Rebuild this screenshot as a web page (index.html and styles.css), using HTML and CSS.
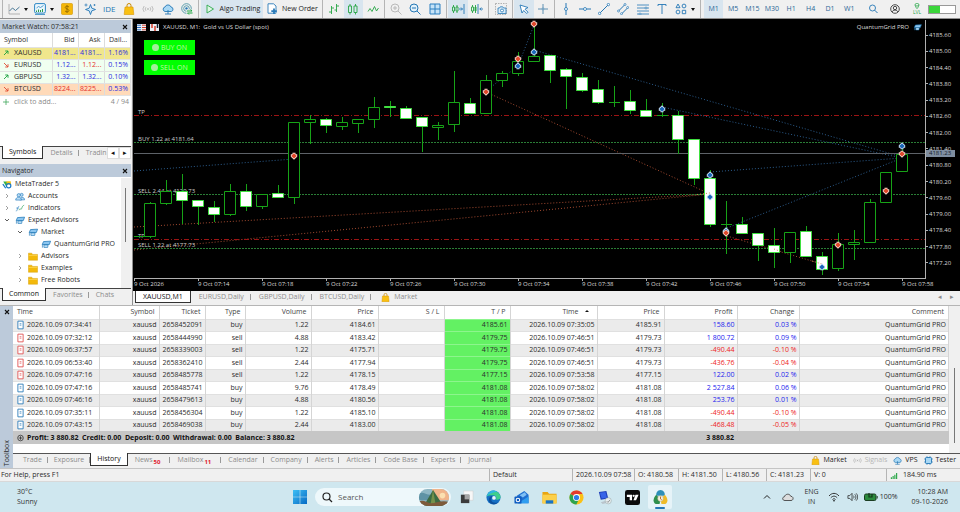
FILE: index.html
```html
<!DOCTYPE html>
<html lang="en">
<head>
<meta charset="utf-8">
<title>MetaTrader 5</title>
<link rel="stylesheet" href="styles.css">
</head>
<body>
<svg class="defs" aria-hidden="true">
  <symbol id="bag" viewBox="0 0 12 12"><path d="M4 4V2.500a2 2 0 0 1 4 0V4" fill="none" stroke="#c98a00" stroke-width="1"/><path d="M2 4h8l.8 7.500H1.200z" fill="#f9c013" stroke="#d99500" stroke-width=".6"/></symbol>
  <symbol id="signal" viewBox="0 0 12 12"><g fill="none" stroke="currentColor" stroke-width=".9"><path d="M2.200 3a4.500 4.500 0 0 0 0 6M9.800 3a4.500 4.500 0 0 1 0 6M4 4.200a2.600 2.600 0 0 0 0 3.600M8 4.200a2.600 2.600 0 0 1 0 3.600"/></g><circle cx="6" cy="6" r=".9" fill="currentColor"/></symbol>
  <symbol id="cloud" viewBox="0 0 12 12"><path d="M3 8.500a2.300 2.300 0 0 1 0-4.500A3.200 3.200 0 0 1 9 4a2.300 2.300 0 0 1 .3 4.500z" fill="#a9d8f5" stroke="#2577b5" stroke-width=".9"/><path d="M6 7v4M3 11h6" fill="none" stroke="#2577b5" stroke-width=".9"/></symbol>
  <symbol id="cap" viewBox="0 0 12 10"><path d="M3 1.500 11.500 1 10 5H1.500z" fill="#8cc6f0" stroke="#1f78b8" stroke-width=".9"/><path d="M3.500 5.500h5L8 8.500H3.500zM1.700 5v3.800" fill="#c5e4f8" stroke="#1f78b8" stroke-width=".8"/></symbol>
  <symbol id="folder" viewBox="0 0 12 10"><path d="M.5 1h4l1 1.500h6V9.500H.5z" fill="#f3b90b" stroke="#d29a00" stroke-width=".5"/><path d="M.8 3.800h10.500" stroke="#ffdf6a" stroke-width=".7"/></symbol>
  <symbol id="doc" viewBox="0 0 8 10"><path d="M1 .6h6v8.800H1z" fill="#fff" stroke="currentColor" stroke-width="1"/><path d="M3 3.500h2M3 5.200h2" stroke="currentColor" stroke-width=".8"/></symbol>
  <symbol id="red" viewBox="0 0 8 8"><path d="M2.500.8h3v1.400h1.700v2.500L4 7.800.8 4.700V2.200h1.700z" fill="#fbd9cf"/><path d="M4 1.200 6.700 4 4 6.600 1.300 4z" fill="#e0472a"/></symbol>
  <symbol id="blue" viewBox="0 0 8 8"><path d="M4 .2 7.200 3.300v2.500H5.500v1.400h-3V5.800H.8V3.300z" fill="#cfe4f7"/><path d="M4 1.400 6.700 4 4 6.800 1.300 4z" fill="#1a66b8"/></symbol>
  <symbol id="x" viewBox="0 0 6 6"><path d="M1 1l4 4M5 1 1 5" stroke="#111" stroke-width="1.100"/></symbol>
  <symbol id="exp" viewBox="0 0 6 6"><path d="M2 1l2 2-2 2" fill="none" stroke="#888" stroke-width=".8"/></symbol>
  <symbol id="col" viewBox="0 0 6 6"><path d="M1 2l2 2 2-2" fill="none" stroke="#333" stroke-width=".8"/></symbol>
  <symbol id="up" viewBox="0 0 6 6"><path d="M1 5 5 1M2.200 1H5v2.800" fill="none" stroke="#18a03c" stroke-width=".9"/></symbol>
  <symbol id="down" viewBox="0 0 6 6"><path d="M1 1l4 4M5 2.200V5H2.200" fill="none" stroke="#e04b32" stroke-width=".9"/></symbol>
</svg>

<header class="toolbar">
  <div class="group first">
    <button class="tool dd" aria-label="Charts"><svg class="i" viewBox="0 0 12 12"><path d="M1 1v10h11" fill="none" stroke="#999" stroke-width=".7"/><path d="M1.500 8l3-3 3 2.500L11.500 4" fill="none" stroke="#4a7896" stroke-width="1"/></svg><i class="caret"></i></button>
    <button class="tool dd" aria-label="Indicators"><svg class="i" viewBox="0 0 12 12"><rect x=".6" y=".6" width="10.800" height="9.500" rx="1.500" fill="#eaf5fc" stroke="#2a86c4"/><path d="M2.500 5l2-1.500 2 1L9.500 2.500" fill="none" stroke="#2a86c4" stroke-width=".8"/><path d="M2.500 9V7.500M4.500 9V6.500M6.500 9V7M8.500 9V6" stroke="#2a9d4a"/><path d="M1 11.500h10" stroke="#2a86c4" stroke-width=".8"/></svg><i class="caret"></i></button>
    <button class="tool" aria-label="Deposit"><svg class="i" viewBox="0 0 12 12"><rect x=".5" y=".5" width="11" height="11" rx="1" fill="#f5b70a" stroke="#d29400" stroke-width=".6"/><path d="M8 4C7 2.800 4.200 3 4.200 4.500S8 6 8 7.500 5 9.200 4 8M6 2v8" fill="none" stroke="#8d6400" stroke-width=".8"/></svg></button>
  </div>
  <div class="group six">
    <button class="tool" aria-label="Assistant"><svg class="i" viewBox="0 0 12 12"><path d="M6.500 1.500 7.800 5.200 11.500 6.500 7.800 7.800 6.500 11.500 5.200 7.800 1.500 6.500 5.200 5.200z" fill="#d4eafa" stroke="#2577b5" stroke-width=".9"/><path d="M2 .5v3M.5 2h3M10.500 1v2M9.500 2h2" stroke="#2577b5" stroke-width=".7"/></svg></button>
    <button class="tool ide">IDE</button>
    <button class="tool" aria-label="Market"><svg class="i"><use href="#bag"/></svg></button>
    <button class="tool pale" aria-label="Signals"><svg class="i"><use href="#signal"/></svg></button>
    <button class="tool" aria-label="VPS"><svg class="i"><use href="#cloud"/></svg></button>
    <button class="tool" aria-label="Copy trading"><svg class="i" viewBox="0 0 12 12"><g fill="none" stroke="#3a8a9c" stroke-width=".8"><circle cx="5.500" cy="5.500" r="4.800"/><circle cx="5.500" cy="5.500" r="2.800"/></g><circle cx="5.500" cy="5.500" r="1.200" fill="#2577b5"/><path d="M5.500 6.500h6v5h-6z" fill="#f0f0f0"/><path d="M6 8h5L9.500 6.700M11.500 10H6.500L8 11.500" fill="none" stroke="#1ba53e" stroke-width="1"/></svg></button>
  </div>
  <div class="group wide">
    <button class="tool text on"><svg class="i" viewBox="0 0 12 12"><path d="M3 2l6.500 4L3 10z" fill="#dff5e4" stroke="#2ca84c" stroke-width=".9"/></svg>Algo Trading</button>
    <button class="tool text"><svg class="i" viewBox="0 0 12 12"><path d="M2 .8h5.500L10 3v7.200H2z" fill="#fff" stroke="#2a7ab8" stroke-width=".9"/><path d="M8 5.500v5.500M5.300 8.200h5.500" stroke="#2a7ab8" stroke-width="1.800"/></svg>New Order</button>
  </div>
  <div class="group three">
    <button class="tool" aria-label="Bar chart"><svg class="i" viewBox="0 0 12 12"><path d="M3.500 3v8M1 9h2.500M3.500 5H6M8.500 1v8M6.500 7h2M8.500 3H11" fill="none" stroke="#26a544" stroke-width=".9"/></svg></button>
    <button class="tool on" aria-label="Candlestick chart"><svg class="i" viewBox="0 0 12 12"><path d="M1.500 3h3v6.500h-3zM7 3h3v6.500H7zM3 1v2M3 9.500V11.500M8.500 1v2M8.500 9.500v2" fill="none" stroke="#26a544" stroke-width=".9"/></svg></button>
    <button class="tool" aria-label="Line chart"><svg class="i" viewBox="0 0 12 12"><path d="M1 8.500l2-3 2 3 2.500-5 2 4.500L11.500 5" fill="none" stroke="#26a544" stroke-width=".9"/></svg></button>
  </div>
  <div class="group three">
    <button class="tool pale" aria-label="Zoom in"><svg class="i" viewBox="0 0 12 12"><circle cx="5" cy="5" r="4" fill="none" stroke="currentColor"/><path d="M8 8l3.500 3.500M3 5h4M5 3v4" stroke="currentColor"/></svg></button>
    <button class="tool" aria-label="Zoom out"><svg class="i" viewBox="0 0 12 12"><circle cx="5" cy="5" r="4" fill="#e2f1fa" stroke="#2577b5"/><path d="M8 8l3.500 3.500M3 5h4" stroke="#2577b5"/></svg></button>
    <button class="tool" aria-label="Tile windows"><svg class="i" viewBox="0 0 12 12"><path d="M1 1h10v10H1zM6 1v10M1 6h10" fill="#c6e3f7" stroke="#2a7fc0"/></svg></button>
  </div>
  <div class="group two">
    <button class="tool on" aria-label="Auto scroll"><svg class="i wide-i" viewBox="0 0 14 12"><path d="M1.500 4v4h2V4zM2.500 2v2M2.500 8v2M5 4v4h2V4zM6 2v2M6 8v2" fill="none" stroke="#26a544" stroke-width=".9"/><path d="M8 6h3.500M10 4.500 11.500 6 10 7.500M13 1v10" fill="none" stroke="#2577b5" stroke-width=".9"/></svg></button>
    <button class="tool" aria-label="Chart shift"><svg class="i wide-i" viewBox="0 0 14 12"><path d="M1.500 4v4h2V4zM2.500 2v2M2.500 8v2M5 4v4h1V4zM5.500 2v8" fill="none" stroke="#26a544" stroke-width=".9"/><path d="M8 1v10M13 6H9.800M11.300 4.500 9.800 6l1.500 1.500" fill="none" stroke="#2577b5" stroke-width=".9"/></svg></button>
  </div>
  <div class="group one">
    <button class="tool" aria-label="Screenshot"><svg class="i" viewBox="0 0 12 12"><rect x=".5" y=".5" width="11" height="11" fill="none" stroke="#888" stroke-width=".6" stroke-dasharray="1.500 1"/><path d="M3 5h1.500l.8-1.200h2.400L8.500 5h2.500v5.500H3z" fill="#d9ecf9" stroke="#2577b5" stroke-width=".8"/><circle cx="7" cy="7.500" r="1.500" fill="#fff" stroke="#2577b5" stroke-width=".8"/></svg></button>
  </div>
  <div class="group two">
    <button class="tool on" aria-label="Cursor"><svg class="i" viewBox="0 0 12 12"><path d="M2 2l8 2.500-3 1.700 3 3-1.300 1.300-3-3L4 10z" fill="#fff" stroke="#2577b5" stroke-width=".9"/></svg></button>
    <button class="tool" aria-label="Crosshair"><svg class="i" viewBox="0 0 12 12"><path d="M6 1v10M1 6h10" stroke="#4f86ab" stroke-width=".9"/><circle cx="6" cy="6" r="1.400" fill="#7ba6c4"/></svg></button>
  </div>
  <div class="group seven">
    <button class="tool" aria-label="Vertical line"><svg class="i" viewBox="0 0 12 12"><path d="M6 0v12" stroke="#2577b5"/><circle cx="6" cy="6" r="1.500" fill="#fff" stroke="#2577b5" stroke-width=".8"/></svg></button>
    <button class="tool" aria-label="Horizontal line"><svg class="i" viewBox="0 0 12 12"><path d="M0 6h12" stroke="#2577b5"/><circle cx="6" cy="6" r="1.500" fill="#fff" stroke="#2577b5" stroke-width=".8"/></svg></button>
    <button class="tool" aria-label="Trendline"><svg class="i" viewBox="0 0 12 12"><path d="M2 10l8-8" stroke="#2577b5"/><circle cx="1.600" cy="10.400" r="1.200" fill="#fff" stroke="#2577b5" stroke-width=".8"/><circle cx="10.400" cy="1.600" r="1.200" fill="#fff" stroke="#2577b5" stroke-width=".8"/></svg></button>
    <button class="tool" aria-label="Channel"><svg class="i" viewBox="0 0 12 12"><path d="M1.500 8 8 1.500M4.500 11 11 4.500" stroke="#2577b5"/><g fill="#fff" stroke="#2577b5" stroke-width=".7"><circle cx="1.500" cy="8" r="1"/><circle cx="8" cy="1.500" r="1"/><circle cx="4.500" cy="10.700" r="1"/><circle cx="10.700" cy="4.500" r="1"/></g></svg></button>
    <button class="tool" aria-label="Fibonacci"><svg class="i" viewBox="0 0 12 12"><path d="M0 2h12M0 5h12M0 8h12M0 11h12" stroke="#2577b5" stroke-width=".8"/><g fill="#fff" stroke="#2577b5" stroke-width=".7"><circle cx="3" cy="11" r="1"/><circle cx="9" cy="5" r="1"/></g></svg></button>
    <button class="tool" aria-label="Text label"><svg class="i" viewBox="0 0 12 12"><path d="M2 3V1.500h8V3M6 1.500v9.500" fill="none" stroke="#2577b5" stroke-width=".9"/></svg></button>
    <button class="tool" aria-label="Shapes"><svg class="i" viewBox="0 0 12 12"><g fill="none" stroke="#2577b5" stroke-width=".9"><path d="M3 1l2 3.700H1z"/><circle cx="9" cy="3" r="1.900"/><circle cx="3" cy="9" r="1.900"/><path d="M7.300 7.300h3.400v3.400H7.300z"/></g></svg></button>
    <i class="caret"></i>
  </div>
  <div class="group eight frames">
    <button class="tool on">M1</button><button class="tool">M5</button><button class="tool">M15</button><button class="tool">M30</button><button class="tool">H1</button><button class="tool">H4</button><button class="tool">D1</button><button class="tool">W1</button>
  </div>
  <div class="end">
    <button class="tool" aria-label="Search"><svg class="i" viewBox="0 0 12 12"><circle cx="5.500" cy="5" r="3" fill="none" stroke="#2577b5" stroke-width=".9"/><path d="M7.700 7.200 10.500 10" stroke="#2577b5"/></svg></button>
    <button class="tool" aria-label="Account"><svg class="i" viewBox="0 0 12 12"><g fill="none" stroke="#222" stroke-width=".8"><circle cx="6" cy="6" r="4.300"/><circle cx="6" cy="5" r="1.700"/><path d="M3 9c1-2.500 5-2.500 6 0"/></g></svg></button>
    <button class="tool lvl"><svg class="mini" viewBox="0 0 6 6"><path d="M3 .3C5.500.3 5.500 3 3 5.600.5 3 .5.3 3 .3zM1.500 2.300l1.500 1L4.800 2" fill="none" stroke="#21a443" stroke-width=".8"/></svg>LVL</button>
    <span class="gauge"><span></span></span>
  </div>
</header>

<main class="work">
  <aside class="side">
    <section class="panel watch">
      <h2>Market Watch: 07:58:21<button aria-label="Close market watch"><svg class="x"><use href="#x"/></svg></button></h2>
      <table class="quotes">
        <thead><tr><th>Symbol</th><th>Bid</th><th>Ask</th><th>Dail...</th></tr></thead>
        <tbody>
          <tr class="gold"><td><svg><use href="#up"/></svg>XAUUSD</td><td>4181...</td><td>4181...</td><td>1.16%</td></tr>
          <tr class="mint"><td><svg><use href="#down"/></svg>EURUSD</td><td>1.12...</td><td class="neg">1.12...</td><td>0.15%</td></tr>
          <tr class="mint"><td><svg><use href="#up"/></svg>GBPUSD</td><td>1.32...</td><td>1.32...</td><td>0.10%</td></tr>
          <tr class="peach"><td><svg><use href="#down"/></svg>BTCUSD</td><td class="neg">8224...</td><td class="neg">8225...</td><td>0.53%</td></tr>
        </tbody>
      </table>
      <div class="add"><svg viewBox="0 0 6 6"><path d="M3 0v6M0 3h6" stroke="#3fa65a" stroke-width=".8"/></svg><span>click to add...</span><span>4 / 94</span></div>
      <nav class="tabs side-tabs"><a href="#" class="sel">Symbols</a><a href="#">Details</a><a href="#" class="cut">Tradin</a><button aria-label="Previous">◂</button><button aria-label="Next">▸</button></nav>
    </section>
    <section class="panel nav">
      <h2>Navigator<button aria-label="Close navigator"><svg class="x"><use href="#x"/></svg></button></h2>
      <div class="tree-wrap">
      <ul class="tree">
        <li class="root"><svg class="t" viewBox="0 0 12 10"><path d="M1.500 1.500h4L7 4 5 7.500z" fill="#37b34a"/><path d="M5 1h5.500L11 5H6z" fill="#f2c21a"/><circle cx="8" cy="6.500" r="2.600" fill="none" stroke="#1878c8" stroke-width="1.400"/><path d="M1 4.500 4.500 9.500" stroke="#1878c8" stroke-width="1.500"/></svg>MetaTrader 5</li>
        <li><svg class="e"><use href="#exp"/></svg><svg class="t" viewBox="0 0 12 10"><g fill="#b9dcf5" stroke="#2a7fc0" stroke-width=".8"><circle cx="8" cy="3" r="1.800"/><path d="M5.500 9c0-4 6-4 6 0z"/><circle cx="4.500" cy="3.500" r="2"/><path d="M.8 9.300c0-4.500 7-4.500 7 0z"/></g></svg>Accounts</li>
        <li><svg class="e"><use href="#exp"/></svg><svg class="t" viewBox="0 0 12 10"><path d="M1 8c2 1 2-6 4-5.500M1.500 4.500h3" fill="none" stroke="#2a7fc0" stroke-width=".8"/><path d="M5 7c1-4 2 1 3-2s1-3 3-4" fill="none" stroke="#2ca05a" stroke-width=".8"/></svg>Indicators</li>
        <li><svg class="e"><use href="#col"/></svg><svg class="t"><use href="#cap"/></svg>Expert Advisors</li>
        <li class="l2"><svg class="e"><use href="#col"/></svg><svg class="t"><use href="#cap"/></svg>Market</li>
        <li class="l3"><svg class="t"><use href="#cap"/></svg>QuantumGrid PRO</li>
        <li class="l2"><svg class="e"><use href="#exp"/></svg><svg class="t"><use href="#folder"/></svg>Advisors</li>
        <li class="l2"><svg class="e"><use href="#exp"/></svg><svg class="t"><use href="#folder"/></svg>Examples</li>
        <li class="l2"><svg class="e"><use href="#exp"/></svg><svg class="t"><use href="#folder"/></svg>Free Robots</li>
        <li class="l2"><svg class="e"><use href="#exp"/></svg><svg class="t"><use href="#folder"/></svg></li>
      </ul>
      <div class="scroll"><span></span></div>
      </div>
      <nav class="tabs side-tabs"><a href="#" class="sel">Common</a><a href="#">Favorites</a><a href="#" class="end-tab">Chats</a></nav>
    </section>
  </aside>

  <section class="chart-col">
    <div class="chart">
      <div class="plot">
        <svg class="canvas">
          <g transform="translate(-134 -20)">
            <g fill="none" stroke="#2b5c8c" stroke-dasharray="1 2">
              <path d="M134 171 294 159M486 91 518 66 534 25M534 50 902 157M662 107 902 158M710 172 902 158M727 228 902 158"/>
            </g>
            <g fill="none" stroke="#a34a30" stroke-dasharray="1 2">
              <path d="M486 92 710 194M134 227 710 194M134 250 710 194M727 236 822 264"/>
            </g>
            <path d="M134 115.500H2000M134 239.500H2000" stroke="#9c1414" stroke-dasharray="5 2 1 2"/>
            <path d="M134 142.500H2000M134 194.500H2000M134 248.500H2000" stroke="#2a7d36" stroke-dasharray="2 1"/>
            <path d="M134 153.500H2000" stroke="#5d6268"/>
            <g class="ctext">
              <text x="138" y="114">TP</text><text x="138" y="141">BUY 1.22 at 4181.64</text><text x="138" y="193">SELL 2.44 at 4179.73</text><text x="138" y="238">TP</text><text x="138" y="247">SELL 1.22 at 4177.73</text>
            </g>
            <path class="wick" d="M134 236.500h11M150.500 202v36M166.500 180v25M182.500 174v50M198.500 201v24M214.500 201v21M230.500 184v32M246.500 184v27M262.500 194v15M278.500 185v9M294.500 197v7M310.500 115v29M326.500 118v15M342.500 117v13M358.500 119v14M374.500 97v31M390.500 101v16M406.500 106v12M422.500 118v34M438.500 122v18M454.500 71v61M470.500 98v8M486.500 75v6M502.500 71v16M518.500 52v24M534.500 25v32M550.500 55v28M566.500 68v41M582.500 73v19M598.500 80v24M614.500 86v21M630.500 90v24M646.500 99v12M662.500 103v14M678.500 111v43M694.500 139v46M710.500 170v57M726.500 201v53M742.500 217v8M758.500 233v28M774.500 228v40M790.500 232v31M806.500 226v6M822.500 252v23M838.500 233v38M854.500 230v30M870.500 199v4M902.500 145v9M609 102.500h11M657 115.500h11M721 224.500h11"/>
            <g transform="translate(-.5 0)">
            <path class="hollow" d="M145 203.500h11v33h-11zM161 191.500h11v12h-11zM225 191.500h11v23h-11zM257 194.500h11v12h-11zM289 122.500h11v75h-11zM305 119.500h11v3h-11zM337 122.500h11v4h-11zM353 119.500h11v4h-11zM369 107.500h11v12h-11zM433 125.500h11v2h-11zM449 102.500h11v22h-11zM481 80.500h11v33h-11zM497 73.500h11v7h-11zM513 61.500h11v12h-11zM529 56.500h11v5h-11zM785 232.500h11v20h-11zM833 244.500h11v24h-11zM849 242.500h11v2h-11zM865 202.500h11v40h-11zM881 172.500h11v30h-11zM897 154.500h11v17h-11z"/>
            <path class="full" d="M177 191.500h11v9h-11zM193 200.500h11v6h-11zM209 207.500h11v7h-11zM241 191.500h11v15h-11zM273 193.500h11v4h-11zM321 119.500h11v6h-11zM385 106.500h11v1h-11zM401 108.500h11v10h-11zM417 117.500h11v9h-11zM465 103.500h11v10h-11zM545 55.500h11v15h-11zM561 69.500h11v7h-11zM577 77.500h11v13h-11zM593 89.500h11v13h-11zM625 101.500h11v9h-11zM641 110.500h11v6h-11zM673 115.500h11v24h-11zM689 139.500h11v39h-11zM705 178.500h11v46h-11zM737 224.500h11v9h-11zM753 233.500h11v12h-11zM769 245.500h11v7h-11zM801 231.500h11v25h-11zM817 256.500h11v13h-11z"/>
            </g>
            <path d="M697 194.500 710 193M774 249l8 3M812 261l10 3" fill="none" stroke="#c98a50" stroke-dasharray="1 2"/>
            <g>
              <use href="#red" x="290" y="152" width="8" height="8"/><use href="#red" x="482" y="88" width="8" height="8"/><use href="#red" x="514" y="55" width="8" height="8"/><use href="#red" x="530" y="20" width="8" height="8"/><use href="#red" x="882" y="187" width="8" height="8"/><use href="#red" x="834" y="241" width="8" height="8"/><use href="#blue" x="722" y="227" width="8" height="8"/><use href="#red" x="722" y="229" width="8" height="8"/><use href="#blue" x="514" y="62" width="8" height="8"/><use href="#blue" x="530" y="48" width="8" height="8"/><use href="#blue" x="658" y="105" width="8" height="8"/><use href="#blue" x="706" y="171" width="8" height="8"/><use href="#blue" x="706" y="193" width="8" height="8"/><use href="#blue" x="818" y="263" width="8" height="8"/><use href="#blue" x="898" y="142" width="8" height="8"/><use href="#red" x="898" y="150" width="8" height="8"/>
            </g>
          </g>
        </svg>
        <div class="chart-head">
          <svg viewBox="0 0 9 7"><path d="M0 0h9v7H0z" fill="#e8eef5"/><path d="M0 1.200h4M0 3.500h4M0 5.800h4" stroke="#2a6fc0"/><path d="M5 1.200h4M5 3.500h4M5 5.800h4" stroke="#d8402c"/></svg>
          <svg viewBox="0 0 9 7"><path d="M0 0h9v7H0z" fill="#e8eef5"/><path d="M2 0v4M5 2v5" stroke="#d8402c" stroke-width="1.500"/><path d="M7.500 0v4" stroke="#123" stroke-width="1.500"/></svg>
          <span>XAUUSD, M1:&nbsp; Gold vs US Dollar (spot)</span>
          <span class="expert">QuantumGrid PRO</span><svg class="capi"><use href="#cap"/></svg>
        </div>
        <div class="trade-btns"><button>BUY ON</button><button>SELL ON</button></div>
      </div>
      <div class="prices">
        <span>4185.60</span><span>4185.00</span><span>4184.40</span><span>4183.80</span><span>4183.20</span><span>4182.60</span><span>4182.00</span><span>4181.40</span><span>4180.80</span><span>4180.20</span><span>4179.60</span><span>4179.00</span><span>4178.40</span><span>4177.80</span><span>4177.20</span>
        <b class="last">4181.23</b>
      </div>
      <div class="times"><span>9 Oct 2026</span><span>9 Oct 07:14</span><span>9 Oct 07:18</span><span>9 Oct 07:22</span><span>9 Oct 07:26</span><span>9 Oct 07:30</span><span>9 Oct 07:34</span><span>9 Oct 07:38</span><span>9 Oct 07:42</span><span>9 Oct 07:46</span><span>9 Oct 07:50</span><span>9 Oct 07:54</span><span>9 Oct 07:58</span></div>
    </div>
    <nav class="tabs chart-tabs"><a href="#" class="sel">XAUUSD,M1</a><a href="#">EURUSD,Daily</a><a href="#">GBPUSD,Daily</a><a href="#">BTCUSD,Daily</a><a href="#" class="mk"><svg class="s"><use href="#bag"/></svg>Market</a><span class="arrows"><i>◂</i><i>▸</i></span></nav>
  </section>
</main>

<section class="toolbox">
  <div class="strip"><button aria-label="Close toolbox"><svg class="x"><use href="#x"/></svg></button><span>Toolbox</span></div>
  <div class="tb-main">
    <div class="tb-body">
    <table class="history">
      <colgroup><col class="c1"><col class="c2"><col class="c3"><col class="c4"><col class="c5"><col class="c6"><col class="c5"><col class="c5"><col class="c7"><col class="c6"><col class="c8"><col class="c9"><col></colgroup>
      <thead><tr><th>Time</th><th>Symbol</th><th>Ticket</th><th>Type</th><th>Volume</th><th>Price</th><th>S / L</th><th>T / P</th><th>Time<i class="sort"></i></th><th>Price</th><th>Profit</th><th>Change</th><th>Comment</th></tr></thead>
      <tbody>
        <tr class="buy"><td><svg><use href="#doc"/></svg>2026.10.09 07:34:41</td><td>xauusd</td><td>2658452091</td><td>buy</td><td>1.22</td><td>4184.61</td><td></td><td>4185.61</td><td>2026.10.09 07:35:05</td><td>4185.91</td><td>158.60</td><td>0.03 %</td><td>QuantumGrid PRO</td></tr>
        <tr class="sell"><td><svg><use href="#doc"/></svg>2026.10.09 07:32:12</td><td>xauusd</td><td>2658444990</td><td>sell</td><td>4.88</td><td>4183.42</td><td></td><td>4179.75</td><td>2026.10.09 07:46:51</td><td>4179.73</td><td>1 800.72</td><td>0.09 %</td><td>QuantumGrid PRO</td></tr>
        <tr class="sell loss"><td><svg><use href="#doc"/></svg>2026.10.09 06:37:57</td><td>xauusd</td><td>2658339003</td><td>sell</td><td>1.22</td><td>4175.71</td><td></td><td>4179.75</td><td>2026.10.09 07:46:51</td><td>4179.73</td><td>-490.44</td><td>-0.10 %</td><td>QuantumGrid PRO</td></tr>
        <tr class="sell loss"><td><svg><use href="#doc"/></svg>2026.10.09 06:53:40</td><td>xauusd</td><td>2658362410</td><td>sell</td><td>2.44</td><td>4177.94</td><td></td><td>4179.75</td><td>2026.10.09 07:46:51</td><td>4179.73</td><td>-436.76</td><td>-0.04 %</td><td>QuantumGrid PRO</td></tr>
        <tr class="sell"><td><svg><use href="#doc"/></svg>2026.10.09 07:47:16</td><td>xauusd</td><td>2658485778</td><td>sell</td><td>1.22</td><td>4178.15</td><td></td><td>4177.15</td><td>2026.10.09 07:53:58</td><td>4177.15</td><td>122.00</td><td>0.02 %</td><td>QuantumGrid PRO</td></tr>
        <tr class="buy"><td><svg><use href="#doc"/></svg>2026.10.09 07:47:16</td><td>xauusd</td><td>2658485741</td><td>buy</td><td>9.76</td><td>4178.49</td><td></td><td>4181.08</td><td>2026.10.09 07:58:02</td><td>4181.08</td><td>2 527.84</td><td>0.06 %</td><td>QuantumGrid PRO</td></tr>
        <tr class="buy"><td><svg><use href="#doc"/></svg>2026.10.09 07:46:16</td><td>xauusd</td><td>2658479613</td><td>buy</td><td>4.88</td><td>4180.56</td><td></td><td>4181.08</td><td>2026.10.09 07:58:02</td><td>4181.08</td><td>253.76</td><td>0.01 %</td><td>QuantumGrid PRO</td></tr>
        <tr class="buy loss"><td><svg><use href="#doc"/></svg>2026.10.09 07:35:11</td><td>xauusd</td><td>2658456304</td><td>buy</td><td>1.22</td><td>4185.10</td><td></td><td>4181.08</td><td>2026.10.09 07:58:02</td><td>4181.08</td><td>-490.44</td><td>-0.10 %</td><td>QuantumGrid PRO</td></tr>
        <tr class="buy loss"><td><svg><use href="#doc"/></svg>2026.10.09 07:43:15</td><td>xauusd</td><td>2658469038</td><td>buy</td><td>2.44</td><td>4183.00</td><td></td><td>4181.08</td><td>2026.10.09 07:58:02</td><td>4181.08</td><td>-468.48</td><td>-0.05 %</td><td>QuantumGrid PRO</td></tr>
      </tbody>
      <tfoot><tr><td colspan="10"><svg viewBox="0 0 8 8"><circle cx="4" cy="4" r="3.200" fill="none" stroke="#222" stroke-width=".8"/><path d="M4 2v4M2 4h4" stroke="#222" stroke-width=".8"/></svg>Profit: 3 880.82&nbsp; Credit: 0.00&nbsp; Deposit: 0.00&nbsp; Withdrawal: 0.00&nbsp; Balance: 3 880.82</td><td>3 880.82</td><td></td><td></td></tr></tfoot>
    </table>
    <div class="scroll"><span></span></div>
    </div>
    <nav class="tabs tb-tabs"><a href="#">Trade</a><a href="#">Exposure</a><a href="#" class="sel">History</a><a href="#">News<sub>50</sub></a><a href="#">Mailbox<sub>11</sub></a><a href="#">Calendar</a><a href="#">Company</a><a href="#">Alerts</a><a href="#">Articles</a><a href="#">Code Base</a><a href="#">Experts</a><a href="#" class="end-tab">Journal</a>
      <span class="links"><button><svg class="s"><use href="#bag"/></svg>Market</button><button class="off"><svg class="s"><use href="#signal"/></svg>Signals</button><button><svg class="s"><use href="#cloud"/></svg>VPS</button><button><svg class="s" viewBox="0 0 12 12"><rect x="2" y="2" width="8" height="8" rx="1" fill="#a9d8f5" stroke="#2577b5" stroke-width="1.200"/><path d="M4 0v2M8 0v2M4 10v2M8 10v2M0 4h2M0 8h2M10 4h2M10 8h2" stroke="#2577b5" stroke-width=".8"/></svg>Tester</button></span>
    </nav>
  </div>
</section>

<div class="status"><span class="grow">For Help, press F1</span><span class="w83">Default</span><span class="w62">2026.10.09 07:58</span><span class="w44">O: 4180.58</span><span class="w44">H: 4181.50</span><span class="w44">L: 4180.56</span><span class="w44">C: 4181.23</span><span class="w76">V: 0</span><span class="w74"><svg viewBox="0 0 8 8"><path d="M1 8V6M3 8V4.500M5 8V3M7 8V1" stroke="#26a544" stroke-width="1.300"/></svg>184.90 ms</span></div>

<footer class="taskbar">
  <div class="weather"><span>30°C</span><span>Sunny</span></div>
  <div class="dock">
    <button class="start" aria-label="Start"><svg viewBox="0 0 16 16"><defs><linearGradient id="w" x1="0" y1="0" x2="1" y2="1"><stop offset="0" stop-color="#3fc0f5"/><stop offset="1" stop-color="#0669c4"/></linearGradient></defs><path d="M1 1h6.700v6.700H1zM8.300 1H15v6.700H8.300zM1 8.300h6.700V15H1zM8.300 8.300H15V15H8.300z" fill="url(#w)"/></svg></button>
    <label class="search"><svg viewBox="0 0 12 12"><circle cx="5.500" cy="5.500" r="3.500" fill="none" stroke="#222" stroke-width="1.200"/><path d="M8 8l3 3" stroke="#222" stroke-width="1.300"/></svg><input type="text" placeholder="Search" aria-label="Search">
      <svg class="pic" viewBox="0 0 32 18"><defs><clipPath id="pc"><rect width="32" height="18" rx="9"/></clipPath></defs><g clip-path="url(#pc)"><path d="M0 0h32v18H0z" fill="#8fb7c4"/><path d="M14 0h18v12H14z" fill="#f0b48a"/><circle cx="25" cy="7" r="3" fill="#fbe0b0"/><path d="M0 5c4-3 7 1 12 1l3 6H0z" fill="#5f93a5"/><path d="M5 18 15 1l11 17z" fill="#3c6b42"/><path d="M12 18l3-17 3 17z" fill="#74904a"/><path d="M0 13c5-2 8 1 12 2s12-4 20-1v4H0z" fill="#7d5a3a"/></g></svg></label>
    <button aria-label="Task view"><svg viewBox="0 0 16 16"><path d="M5 1h10v10H5z" fill="#f7f7f7" stroke="#ccc" stroke-width=".5"/><path d="M2 5h9v9H2z" fill="#3b3b3b"/><path d="M6 5h5v5H6z" fill="#a5a5a5"/></svg></button>
    <div class="apps">
    <button aria-label="Edge"><svg viewBox="0 0 16 16"><circle cx="8" cy="8" r="7.500" fill="#1670c4"/><path d="M.7 7C2-1 14-1 15.500 7c.2 3-2.500 4-5 3.200C12 8 10 5.500 7.500 5.500 4 5.500 2 6 .7 7z" fill="#3fcf8c"/><path d="M.7 7C2 0 9-1 12 2 8 2 3 4 .7 7z" fill="#2fb4e0"/><path d="M6 8c-2 4 2 7 7 5-3 3.500-9 2.500-10-1.500C2.500 9 4 7 6.500 6.500 6.800 7 6.300 7.500 6 8z" fill="#0d4f9c"/><circle cx="8.500" cy="8.500" r="2" fill="#eaf7fb"/></svg></button>
    <button aria-label="Outlook"><svg viewBox="0 0 16 16"><path d="M3 6l8-5 4.500 4v9H4z" fill="#1f6fd0"/><path d="M6 5.500l5.500-3L13.500 5l-4 3z" fill="#7fc0f5"/><path d="M4 14l11.500-7v7z" fill="#2f9df0"/><rect x=".5" y="7" width="7.500" height="7.500" rx="1" fill="#0f5cc0"/><circle cx="4.200" cy="10.700" r="1.900" fill="none" stroke="#fff" stroke-width="1.100"/></svg></button>
    <button aria-label="Files"><svg viewBox="0 0 16 16"><path d="M.5 2h5.500l1.500 2h8v10H.5z" fill="#e8a512"/><path d="M.5 5h15v9.500H.5z" fill="#fbd04b"/><path d="M4 11h8v3.500H4z" fill="#1773c8"/></svg></button>
    <button aria-label="Chrome"><svg viewBox="0 0 16 16"><circle cx="8" cy="8" r="7.500" fill="#fbc116"/><path d="M8 8 1.500 4.200A7.500 7.500 0 0 1 14.500 4.300H8z" fill="#e33b2e"/><path d="M8 8 1.500 4.200A7.500 7.500 0 0 0 7.800 15.500L11 9z" fill="#2da44e"/><circle cx="8" cy="8" r="3.700" fill="#fff"/><circle cx="8" cy="8" r="2.800" fill="#2f7de8"/></svg></button>
    <button aria-label="Network"><svg viewBox="0 0 16 16"><path d="M2 2l8-1 2 8-8 1.500z" fill="#1f3fb8"/><path d="M3 3l6-.8 1.500 6L5 9z" fill="#3764e8"/><path d="M4 13l7-2 2 2-7 2z" fill="#b9c4cc"/><circle cx="12" cy="11.500" r="3.300" fill="#e8eef0" stroke="#9aa" stroke-width=".6"/><path d="M10.500 12l1.200 1.200 2-2.500" fill="none" stroke="#777" stroke-width=".8"/></svg></button>
    <button aria-label="TradingView"><svg viewBox="0 0 16 16"><rect width="16" height="16" rx="2.500" fill="#0b0b0b"/><path d="M2 5h5.500v6H5V7.500H2zM11.200 5H14.500l-2.700 6H9z" fill="#fff"/><circle cx="9.200" cy="6.200" r="1.200" fill="#fff"/></svg></button>
    <button class="active" aria-label="MetaTrader"><svg viewBox="0 0 16 16"><path d="M8 0c3 0 5 3 4.500 6h-9C3 3 5 0 8 0z" fill="#2d8fb8"/><path d="M3.500 5 8 10l-1 5H3C-.5 13.500 0 8 3.500 5z" fill="#2f8f4e"/><path d="M12.500 5 8 10l1 5h4c3.500-1.500 3-7-.5-10z" fill="#eebb2a"/><circle cx="8" cy="9" r="3" fill="#f4efe0" stroke="#b7a878" stroke-width=".5"/><path d="M8 7v2.500l1.200.8" fill="none" stroke="#b5651d"/></svg></button>
    </div>
  </div>
  <div class="tray">
    <svg class="chev" viewBox="0 0 8 8"><path d="M1 5.500l3-3 3 3" fill="none" stroke="#222"/></svg>
    <svg class="onedrive" viewBox="0 0 12 10"><path d="M3 8.500C0 8.500 0 5 2.500 4.700 3 2 7.500 1 8.800 4.300c3 0 3 4.200.2 4.200z" fill="#ddd" stroke="#444" stroke-width=".9"/></svg>
    <div class="lang"><span>ENG</span><span>IN</span></div>
    <svg class="wifi" viewBox="0 0 12 10"><path d="M1 4c3-3.500 7-3.500 10 0M2.800 5.800c2-2.200 4.400-2.200 6.400 0M4.500 7.500c1-1 2-1 3 0" fill="none" stroke="#222" stroke-width=".9"/><circle cx="6" cy="8.800" r=".8"/></svg>
    <svg class="vol" viewBox="0 0 12 10"><path d="M1 3.500h2L5.500 1v8L3 6.500H1zM7 3.500c.8 1 .8 2 0 3M8.500 2c1.700 2 1.700 4 0 6M10 1c2.200 2.500 2.200 5.500 0 8" fill="none" stroke="#222" stroke-width=".8"/></svg>
    <svg class="bat" viewBox="0 0 14 8"><rect x=".5" y="1" width="11.500" height="6.500" rx="1.500" fill="#2a8a3c" stroke="#1c3d22"/><path d="M13.200 3v2.500" stroke="#1c3d22"/><path d="M5 0v4h3V1" fill="none" stroke="#12351a" stroke-width="1.200"/></svg>
    <span class="pct">100%</span>
    <div class="clock"><span>10:28 AM</span><span>09-10-2026</span></div>
  </div>
</footer>
</body>
</html>
```
FILE: styles.css
```css
* { box-sizing: border-box; }
html, body { height: 100%; }
body {
  margin: 0;
  display: flex;
  flex-direction: column;
  background: #f0f0f0;
  color: #2b2b2b;
  font: 7px/10px "Open Sans", "Noto Sans", sans-serif;
  overflow: hidden;
}
button, input { font: inherit; color: inherit; border: 0; background: none; padding: 0; margin: 0; }
a { color: inherit; text-decoration: none; }
h2 { margin: 0; font: inherit; }
svg { display: block; flex: none; }
.defs { position: absolute; width: 0; height: 0; }

/* toolbar */
.toolbar { flex: none; display: flex; height: 19px; padding-left: 2px; border-bottom: 1px solid #8f8f8f; background: #f0f0f0; }
.group { display: grid; grid-auto-flow: column; grid-auto-columns: 1fr; border-left: 1px solid #b4b4b4; height: 18px; padding: 0 1px; }
.tool { display: flex; align-items: center; justify-content: center; min-width: 0; color: #2b6797; white-space: nowrap; }
.tool.on { background: #d8e5ef; }
.tool.pale { color: #b9b9b9; }
.i { width: 12px; height: 12px; }
.wide-i { width: 14px; }
.caret { align-self: center; width: 0; height: 0; border: 2px solid transparent; border-top: 3px solid #111; border-bottom: 0; }
.first { width: 76px; grid-template-columns: 27px 26px 1fr; }
.dd { gap: 4px; }
.six { width: 120px; }
.ide { font-size: 8px; color: #2577b5; }
.wide { width: 124px; grid-template-columns: 62px 1fr; padding: 0 1px 0 2px; }
.text { gap: 4px; color: #222; }
.three { width: 62px; }
.two { width: 42px; }
.one { width: 24px; }
.seven { width: 146px; grid-template-columns: repeat(7, 1fr) 8px; }
.eight { width: 160px; padding: 0 1px 0 3px; }
.end { display: flex; align-items: center; margin-left: 2px; }
.end .tool { width: 22px; height: 18px; }
.end .lvl { flex-direction: column; font-size: 5px; line-height: 6px; color: #21a443; }
.mini { width: 6px; height: 6px; }
.gauge { width: 28px; height: 9px; border: 1px solid #999; background: #fff; display: flex; }
.gauge span { width: 43%; background: #3bd63b; }

/* workspace */
.work { flex: 1; display: flex; min-height: 0; }
.side { flex: none; width: 132px; display: flex; flex-direction: column; padding: 1px 0 3px; }
.panel { display: flex; flex-direction: column; background: #fff; margin-right: 1px; }
.watch { height: 140px; margin-bottom: 4px; }
.nav { flex: 1; min-height: 0; }
.panel h2 { flex: none; display: flex; justify-content: space-between; align-items: center; height: 13px; padding: 0 3px 0 2px; background: #bccada; }
.x { width: 6px; height: 6px; }
.quotes { border-collapse: collapse; table-layout: fixed; width: 100%; }
.quotes th, .quotes td { padding: 0 2px 0 0; height: 12px; text-align: right; font-weight: 400; border-right: 1px solid #dcdcdc; border-bottom: 1px solid #e2e2e2; line-height: 10px; white-space: nowrap; color: #2b2be0; }
.quotes th { height: 14px; padding-right: 3px; color: #333; }
.quotes th:first-child, .quotes td:first-child { width: 52px; text-align: left; color: #2b2b2b; }
.quotes th:first-child { padding-left: 4px; }
.quotes th:nth-child(2), .quotes th:nth-child(3) { width: 26px; }
.quotes svg { float: left; width: 6px; height: 6px; margin: 2px 5px 0 3px; }
.quotes .neg { color: #e5322d; }
.gold td { background: #f0e68c; }
.mint td { background: #f0fff0; }
.peach td { background: #ffdab9; }
.add { display: flex; align-items: center; gap: 5px; height: 12px; padding: 0 2px 0 3px; color: #8a8a8a; }
.add svg { width: 6px; height: 6px; }
.add span:last-child { margin-left: auto; }

.tabs { flex: none; display: flex; background: #f0f0f0; color: #8c8c8c; }
.tabs a { display: flex; align-items: center; padding: 0 6px; position: relative; white-space: nowrap; }
.tabs a::after { content: ""; position: absolute; right: 0; top: 3px; bottom: 3px; width: 1px; background: #999; }
.tabs .sel { background: #fff; color: #111; border: 1px solid #333; border-top: 0; }
.tabs .sel::after, .tabs .end-tab::after { display: none; }
.side-tabs { margin-top: auto; height: 14px; border-top: 1px solid #444; padding: 0 0 1px 2px; }
.side-tabs .sel { margin-top: -1px; }
.side-tabs a + a { padding-left: 7px; }
.side-tabs .cut { flex: 1; min-width: 0; padding-right: 0; overflow: hidden; }
.side-tabs .cut::after { display: none; }
.side-tabs button { width: 12px; background: #fff; border: 1px solid #ddd; line-height: 8px; color: #111; }

.tree-wrap { flex: 1; display: flex; min-height: 0; overflow: hidden; padding-top: 1px; }
.tree { flex: 1; list-style: none; margin: 0; padding: 0; overflow: hidden; }
.tree li { display: flex; align-items: center; height: 12px; padding-left: 4px; white-space: nowrap; }
.tree .root { padding-left: 2px; }
.tree .l2 { padding-left: 17px; }
.tree .l3 { padding-left: 41px; }
.e { width: 6px; height: 6px; margin-right: 5px; }
.t { width: 10px; height: 9px; margin-right: 3px; }
.tree-wrap .scroll { width: 10px; background: #f0f0f0; padding: 10px 4px; }
.scroll span { display: block; width: 1px; height: 54px; background: #777; }

/* chart */
.chart-col { flex: 1; min-width: 0; display: flex; flex-direction: column; border-left: 1px solid #8f8f8f; }
.chart { flex: 1; min-height: 0; display: grid; grid-template-columns: 1fr 34px; grid-template-rows: 1fr 12px; background: #000; color: #dcdcdc; border-top: 1px solid #000; border-left: 1px solid #000; font-size: 6px; }
.plot { position: relative; overflow: hidden; border-right: 1px solid #b0b0b0; border-bottom: 1px solid #b0b0b0; }
.canvas { position: absolute; inset: 0; width: 100%; height: 100%; }
.ctext { fill: #cfcfcf; font-size: 6px; }
.wick { stroke: #17a317; fill: none; }
.hollow { stroke: #17a317; fill: #000; }
.full { stroke: #3fe03f; fill: #fff; }
.chart-head { position: absolute; left: 3px; right: 3px; top: 2px; display: flex; align-items: center; gap: 4px; }
.chart-head svg { width: 9px; height: 7px; }
.expert { margin-left: auto; }
.trade-btns { position: absolute; left: 10px; top: 20px; display: grid; gap: 5px; font-size: 7px; }
.trade-btns button { width: 51px; height: 15px; background: #00ff00; color: #c4f5a8; display: flex; align-items: center; justify-content: center; gap: 2px; }
.trade-btns button::before { content: ""; width: 7px; height: 7px; border-radius: 50%; background: #a4f09a; }
.prices { position: relative; display: flex; flex-direction: column; padding: 7px 0 8px 0; }
.prices span { flex: 1; display: flex; align-items: center; gap: 1px; }
.prices span::before { content: ""; width: 2px; height: 1px; background: #b0b0b0; }
.last { position: absolute; left: 0; top: 130px; width: 29px; padding-left: 3px; background: #7f8ea0; color: #16202c; font-weight: 400; line-height: 7px; }
.times { grid-column: 1 / -1; display: flex; overflow: hidden; }
.times span { flex: none; width: 64px; position: relative; white-space: nowrap; line-height: 11px; }
.times span::before { content: ""; position: absolute; left: 0; top: 0; width: 1px; height: 2px; background: #b0b0b0; }
.chart-tabs { height: 14px; padding: 0 6px 2px 2px; }
.chart-tabs a { padding: 0 7px 0 8px; }
.chart-tabs .sel { padding: 0 7px; }
.chart-tabs .mk { padding-left: 10px; }
.chart-tabs .mk::after { display: none; }
.s { width: 9px; height: 9px; margin-right: 4px; }
.arrows { margin-left: auto; display: flex; gap: 8px; }
.arrows i { font-style: normal; line-height: 12px; }

/* toolbox */
.toolbox { flex: none; display: flex; height: 163px; border-top: 1px solid #b5b5b5; }
.strip { flex: none; width: 13px; background: #bccada; display: flex; flex-direction: column; justify-content: space-between; align-items: center; padding: 3px 0 2px; }
.strip span { writing-mode: vertical-rl; transform: rotate(180deg); }
.tb-main { flex: 1; min-width: 0; display: flex; flex-direction: column; }
.tb-body { flex: 1; display: flex; background: #fff; align-items: flex-start; }
.tb-body .scroll { width: 11px; align-self: stretch; background: #f0f0f0; padding: 62px 5px 0; }
.tb-body .scroll span { height: 75px; }
.history { flex: 1; border-collapse: collapse; table-layout: fixed; }
.history th, .history td { padding: 0 2px 0 0; text-align: right; font-weight: 400; border-right: 1px solid #d5d5d5; line-height: 10px; white-space: nowrap; overflow: hidden; }
.history th { height: 13px; padding-right: 4px; color: #444; }
.history tbody td { height: 12px; border-top: 1px solid #e0e0e0; }
.history tbody tr:nth-child(even) td { height: 13px; }
.history tbody tr:nth-child(odd) td { background: #ebebeb; }
.history tbody td:nth-child(8), .history tbody tr:nth-child(n) td:nth-child(8) { background: #63f163; border-top-color: #8df58d; }
.history th:first-child, .history td:first-child { text-align: left; padding-left: 4px; }
.history td svg { float: left; width: 7px; height: 10px; margin-right: 3px; }
.history td:nth-child(11), .history td:nth-child(12) { color: #2222ee; }
.history .loss td:nth-child(11), .history .loss td:nth-child(12) { color: #ee2222; }
.buy svg { color: #2a7ab8; }
.sell svg { color: #e05050; }
.history tfoot td { height: 13px; background: #c6c6c6; border: 0; font-weight: 700; color: #111; }
.history tfoot tr td:nth-child(2) { padding-right: 3px; }
.sort { display: inline-block; margin: 0 4px 2px 6px; border: 2px solid transparent; border-bottom: 2px solid #111; border-top: 0; }
.c1 { width: 86px; }
.c2 { width: 60px; }
.c3 { width: 46px; }
.c4 { width: 40px; }
.c5 { width: 66px; }
.c6 { width: 67px; }
.c7 { width: 87px; }
.c8 { width: 73px; }
.c9 { width: 62px; }
.tb-tabs { height: 15px; border-top: 1px solid #555; padding: 0 4px 2px; }
.tb-tabs .sel { margin-top: -1px; }
.tb-tabs .sel ~ a { padding-left: 7px; }
.tb-tabs sub { color: #e0202c; font-weight: 700; font-size: 6px; line-height: 6px; margin: 3px 4px 0 1px; }
.links { margin-left: auto; display: flex; gap: 6px; color: #222; }
.links button { display: flex; align-items: center; }
.links .s { margin-right: 3px; }
.links .off { color: #b5b5b5; }

/* status */
.status { flex: none; display: flex; align-items: center; height: 14px; border-top: 1px solid #c4c4c4; border-bottom: 1px solid #d8d8d8; }
.status span { border-left: 1px solid #b5b5b5; padding-left: 3px; white-space: nowrap; display: flex; align-items: center; height: 12px; }
.status .grow { flex: 1; border: 0; padding-left: 1px; }
.status svg { width: 8px; height: 7px; margin-right: 5px; }
.w83 { width: 83px; }
.w62 { width: 62px; }
.w44 { width: 44px; }
.w76 { width: 76px; }
.w74 { width: 74px; }

/* taskbar */
.taskbar { flex: none; position: relative; display: flex; justify-content: space-between; align-items: center; height: 30px; padding: 0 12px 0 17px; background: #cfe7ef; }
.weather, .lang, .clock { display: flex; flex-direction: column; color: #333; }
.dock { position: absolute; left: 50%; transform: translateX(-50%); display: flex; align-items: center; height: 30px; width: 388px; }
.dock button { width: 27px; height: 24px; display: flex; align-items: center; justify-content: center; border-radius: 2px; }
.dock button svg { width: 15px; height: 15px; }
.apps { flex: 1; display: grid; grid-template-columns: repeat(7, 1fr); justify-items: center; }
.dock .active { position: relative; background: #e6f3f8; width: 24px; }
.active::after { content: ""; position: absolute; left: 7px; right: 7px; bottom: 0; height: 2px; border-radius: 1px; background: #2577b5; }
.dock .start svg { width: 16px; height: 16px; }
.search { display: flex; align-items: center; width: 136px; height: 18px; border-radius: 9px; background: #eef8fb; padding: 0 1px 0 6px; margin: 0 2px; }
.search > svg { width: 12px; height: 12px; margin-right: 5px; }
.search input { flex: 1; min-width: 0; font-size: 8px; outline: 0; }
.search input::placeholder { color: #555; opacity: 1; }
.search .pic { width: 32px; height: 17px; margin: 0; }
.tray { display: flex; align-items: center; }
.chev { width: 8px; height: 8px; margin-right: 11px; }
.onedrive { width: 12px; height: 10px; margin-right: 10px; }
.lang { align-items: center; margin-right: 9px; }
.wifi { width: 12px; height: 10px; margin-right: 7px; }
.vol { width: 11px; height: 10px; margin-right: 6px; }
.bat { width: 14px; height: 8px; margin-right: 2px; }
.pct { margin-right: 14px; }
.clock { align-items: flex-end; }
```
